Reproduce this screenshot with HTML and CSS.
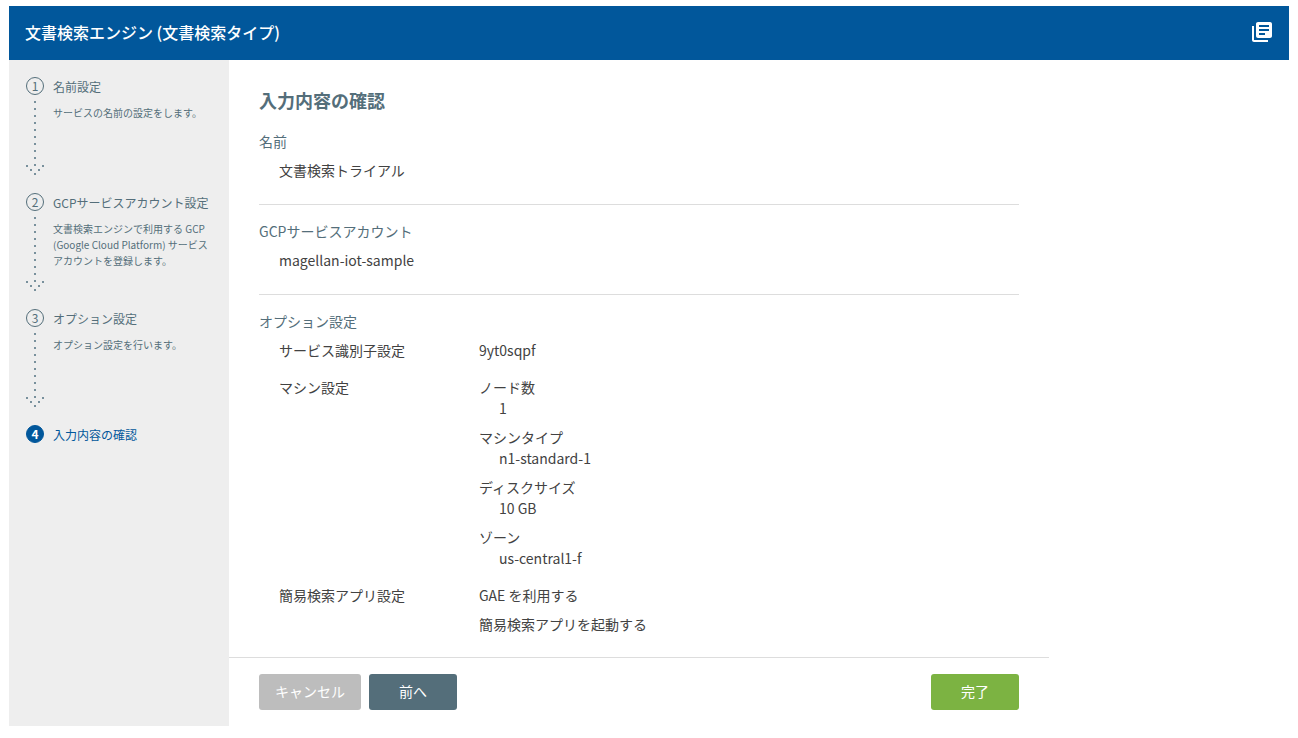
FILE: index.html
```html
<!DOCTYPE html>
<html lang="ja">
<head>
  <meta charset="UTF-8">
  <meta name="viewport" content="width=device-width, initial-scale=1.0">
  <title>文書検索エンジン</title>
  <link rel="stylesheet" href="styles.css">
</head>
<body>
  <!-- 矢印は各ステップで共通 -->
  <svg class="defs" width="0" height="0" aria-hidden="true">
    <symbol id="arrow" viewBox="0 0 18 74">
      <path d="M8 0h2v2h-2zM8 7h2v2h-2zM8 14h2v2h-2zM8 21h2v2h-2zM8 28h2v2h-2zM8 35h2v2h-2zM8 42h2v2h-2zM8 49h2v2h-2zM8 56h2v2h-2zM8 63h2v2h-2zM0 64h2v2h-2zM4 68h2v2h-2zM8 72h2v2h-2zM12 68h2v2h-2zM16 64h2v2h-2z"/>
    </symbol>
  </svg>

  <div class="card">
    <header class="header">
      <h1>文書検索エンジン (文書検索タイプ)</h1>
      <button class="icon-button" type="button" aria-label="ドキュメント">
        <svg width="24" height="24" viewBox="0 0 24 24" fill="currentColor">
          <path d="M4 6H2v14c0 1.1.9 2 2 2h14v-2H4V6zm16-4H8c-1.1 0-2 .9-2 2v12c0 1.1.9 2 2 2h12c1.1 0 2-.9 2-2V4c0-1.1-.9-2-2-2zm-1 9H9V9h10v2zm-4 4H9v-2h6v2zm4-8H9V5h10v2z"/>
        </svg>
      </button>
    </header>

    <div class="body">
      <!-- ステップ -->
      <ol class="steps">
        <li class="step">
          <div class="step-mark">
            <span class="step-number">1</span>
            <svg class="step-arrow"><use href="#arrow"/></svg>
          </div>
          <div class="step-text">
            <h2>名前設定</h2>
            <p>サービスの名前の設定をします。</p>
          </div>
        </li>
        <li class="step">
          <div class="step-mark">
            <span class="step-number">2</span>
            <svg class="step-arrow"><use href="#arrow"/></svg>
          </div>
          <div class="step-text">
            <h2>GCPサービスアカウント設定</h2>
            <p>文書検索エンジンで利用する GCP (Google Cloud Platform) サービスアカウントを登録します。</p>
          </div>
        </li>
        <li class="step">
          <div class="step-mark">
            <span class="step-number">3</span>
            <svg class="step-arrow"><use href="#arrow"/></svg>
          </div>
          <div class="step-text">
            <h2>オプション設定</h2>
            <p>オプション設定を行います。</p>
          </div>
        </li>
        <li class="step active">
          <div class="step-mark">
            <span class="step-number">4</span>
          </div>
          <div class="step-text">
            <h2>入力内容の確認</h2>
          </div>
        </li>
      </ol>

      <!-- 確認内容 -->
      <main class="main">
        <div class="content">
          <h2 class="title">入力内容の確認</h2>

          <section class="section">
            <h3>名前</h3>
            <p class="value">文書検索トライアル</p>
          </section>

          <section class="section">
            <h3>GCPサービスアカウント</h3>
            <p class="value">magellan-iot-sample</p>
          </section>

          <section class="section">
            <h3>オプション設定</h3>
            <dl class="options">
              <dt>サービス識別子設定</dt>
              <dd>9yt0sqpf</dd>
              <dt>マシン設定</dt>
              <dd>
                <dl class="machine">
                  <div>
                    <dt>ノード数</dt>
                    <dd>1</dd>
                  </div>
                  <div>
                    <dt>マシンタイプ</dt>
                    <dd>n1-standard-1</dd>
                  </div>
                  <div>
                    <dt>ディスクサイズ</dt>
                    <dd>10 GB</dd>
                  </div>
                  <div>
                    <dt>ゾーン</dt>
                    <dd>us-central1-f</dd>
                  </div>
                </dl>
              </dd>
              <dt>簡易検索アプリ設定</dt>
              <dd class="app">
                <p>GAE を利用する</p>
                <p>簡易検索アプリを起動する</p>
              </dd>
            </dl>
          </section>
        </div>

        <div class="actions">
          <button class="button cancel" type="button">キャンセル</button>
          <button class="button prev" type="button">前へ</button>
          <button class="button done" type="button">完了</button>
        </div>
      </main>
    </div>
  </div>
</body>
</html>
```

FILE: styles.css
```css
* {
  box-sizing: border-box;
}

body {
  margin: 6px 9px 12px;
  background: #fff;
  color: #424242;
  font-family: "Noto Sans CJK JP", sans-serif;
  font-size: 14px;
  line-height: 21px;
}

h1, h2, h3, p, ol, dl, dd {
  margin: 0;
  padding: 0;
}

.defs {
  display: block;
}

.card {
  background: #fff;
  box-shadow: 0 2px 5px rgba(0, 0, 0, 0.16), 0 2px 10px rgba(0, 0, 0, 0.12);
}

.header {
  display: flex;
  align-items: center;
  justify-content: space-between;
  height: 54px;
  padding: 0 15px 2px 16px;
  background: #01579b;
  color: #fff;
}

.header h1 {
  font-size: 16px;
  font-weight: 500;
}

.icon-button {
  display: flex;
  padding: 0;
  border: none;
  background: none;
  color: inherit;
  cursor: pointer;
}

.body {
  display: flex;
}

/* ステップ */
.steps {
  flex: none;
  width: 220px;
  padding: 17px 16px;
  background: #eee;
  color: #546e7a;
  list-style: none;
}

.step {
  display: flex;
  gap: 8px;
  min-height: 116px;
}

.step-mark {
  flex: none;
  width: 20px;
  display: flex;
  flex-direction: column;
  align-items: center;
  gap: 6px;
}

.step-number {
  width: 18px;
  height: 18px;
  border: 1px solid #546e7a;
  border-radius: 50%;
  font-size: 12px;
  line-height: 16px;
  text-align: center;
}

.step-arrow {
  width: 18px;
  height: 74px;
  fill: #78909c;
}

.step-text h2 {
  font-size: 12px;
  font-weight: 400;
  line-height: 20px;
  white-space: nowrap;
}

.step-text p {
  margin-top: 8px;
  font-size: 10px;
  line-height: 16px;
}

.step.active {
  min-height: 0;
  color: #01579b;
}

.step.active .step-number {
  border-color: #01579b;
  background: #01579b;
  color: #fff;
  font-weight: 700;
}

/* 確認内容 */
.main {
  flex: 1;
  max-width: 820px;
}

.content {
  padding: 27px 30px 22px;
}

.title {
  margin-bottom: 18px;
  color: #546e7a;
  font-size: 18px;
  font-weight: 700;
  line-height: 26px;
}

.section + .section {
  margin-top: 23px;
  padding-top: 16px;
  border-top: 1px solid #ddd;
}

.section h3 {
  margin-bottom: 8px;
  color: #546e7a;
  font-size: 14px;
  font-weight: 400;
}

.value {
  padding-left: 20px;
}

.options {
  display: grid;
  grid-template-columns: 200px 1fr;
  row-gap: 16px;
  padding-left: 20px;
}

.machine,
.app {
  display: grid;
  row-gap: 8px;
}

.machine dd {
  padding-left: 20px;
}

.actions {
  display: flex;
  gap: 8px;
  padding: 16px 30px;
  border-top: 1px solid #ddd;
}

.button {
  min-width: 88px;
  height: 36px;
  padding: 0 16px 3px;
  border: none;
  border-radius: 3px;
  color: #fff;
  font-family: inherit;
  font-size: 14px;
  cursor: pointer;
}

.cancel {
  background: #bdbdbd;
}

.prev {
  background: #546e7a;
}

.done {
  margin-left: auto;
  background: #7cb342;
}
```
